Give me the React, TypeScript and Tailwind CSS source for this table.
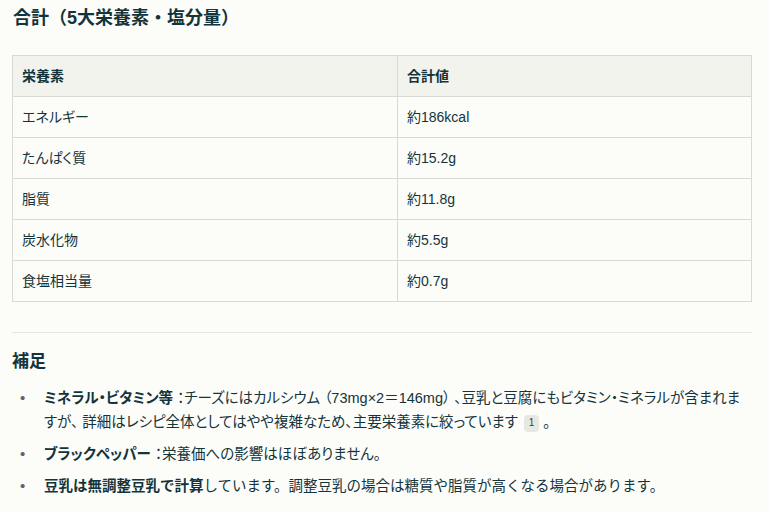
import React from "react";

const rows: [string, string][] = [
  ["エネルギー", "約186kcal"],
  ["たんぱく質", "約15.2g"],
  ["脂質", "約11.8g"],
  ["炭水化物", "約5.5g"],
  ["食塩相当量", "約0.7g"],
];

export default function App() {
  return (
    <div
      className="min-h-[512px] w-[769px] bg-[#fcfcf9] text-[#13343b]"
      style={{ fontFamily: '"Liberation Sans", "Noto Sans CJK JP", sans-serif' }}
    >
      <div className="w-[752px] pl-[12px] pt-[6px]">
        <h2 className="text-[18px] font-bold leading-[24px] pl-[1px]">合計（5大栄養素・塩分量）</h2>
        <table className="mt-[25px] w-[740px] border-collapse text-[14px] [font-feature-settings:'palt']">
          <thead>
            <tr className="bg-[#f3f3ee]">
              <th className="w-[385px] border border-[#d9d9d4] px-[9px] py-[10px] text-left font-semibold leading-[20px]">栄養素</th>
              <th className="border border-[#d9d9d4] px-[9px] py-[10px] text-left font-semibold leading-[20px]">合計値</th>
            </tr>
          </thead>
          <tbody>
            {rows.map(([a, b]) => (
              <tr key={a}>
                <td className="border border-[#d9d9d4] px-[9px] py-[10px] leading-[20px]">{a}</td>
                <td className="border border-[#d9d9d4] px-[9px] py-[10px] leading-[20px]">{b}</td>
              </tr>
            ))}
          </tbody>
        </table>
        <div className="mt-[30px] h-px w-[740px] bg-[#e5e5e0]" />
        <h3 className="mt-[17px] text-[17px] font-bold leading-[24px]">補足</h3>
        <ul className="mt-[12px] flex flex-col gap-[8px] text-[14.5px] leading-[24px]">
          <li className="flex">
            <span className="w-[32px] shrink-0 pl-[8px] text-[15px] text-[#5f6368]">•</span>
            <span className="w-[700px] [font-feature-settings:'palt']">
              <strong>ミネラル・ビタミン等</strong> ：チーズにはカルシウム （73mg×2＝146mg） 、豆乳と豆腐にもビタミン・ミネラルが含まれますが、 詳細はレシピ全体としてはやや複雑なため、主要栄養素に絞っています
              <span className="ml-[6px] mr-[4px] inline-flex h-[17px] w-[15px] items-center justify-center rounded-[4px] bg-[#e8e8e3] align-[1px] text-[10px] leading-none text-[#374151]">1</span>。
            </span>
          </li>
          <li className="flex">
            <span className="w-[32px] shrink-0 pl-[8px] text-[15px] text-[#5f6368]">•</span>
            <span className="[font-feature-settings:'palt']">
              <strong>ブラックペッパー</strong> ：栄養価への影響はほぼありません。
            </span>
          </li>
          <li className="flex">
            <span className="w-[32px] shrink-0 pl-[8px] text-[15px] text-[#5f6368]">•</span>
            <span>
              <strong>豆乳は無調整豆乳で計算</strong>しています。調整豆乳の場合は糖質や脂質が高くなる場合があります。
            </span>
          </li>
        </ul>
      </div>
    </div>
  );
}
